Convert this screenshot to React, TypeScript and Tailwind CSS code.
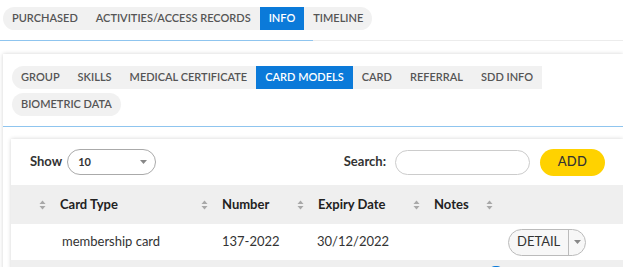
const mainTabs = ['PURCHASED', 'ACTIVITIES/ACCESS RECORDS', 'INFO', 'TIMELINE']
const subTabs = ['GROUP', 'SKILLS', 'MEDICAL CERTIFICATE', 'CARD MODELS', 'CARD', 'REFERRAL', 'SDD INFO']

function SortIcon() {
  return (
    <svg width="7" height="10" viewBox="0 0 7 10" className="shrink-0 text-[#a8a8a8]">
      <path d="M3.5 0.5 L6.5 4 H0.5 Z" fill="currentColor" />
      <path d="M3.5 9.5 L6.5 6 H0.5 Z" fill="currentColor" />
    </svg>
  )
}

function Caret() {
  return (
    <svg width="7" height="4" viewBox="0 0 7 4">
      <path d="M0 0 H7 L3.5 4 Z" fill="#888" />
    </svg>
  )
}

function Tab({ label, active }: { label: string; active?: boolean }) {
  return (
    <span
      className={
        active
          ? 'flex h-[23px] items-center bg-[#0b7ad9] px-[9px] text-white'
          : 'flex h-[23px] items-center px-[9px] text-[#555]'
      }
    >
      {label}
    </span>
  )
}

export default function App() {
  return (
    <div className="h-[267px] w-[623px] overflow-hidden bg-white font-['Lato',sans-serif] text-[11px] font-semibold">
      {/* top tabs */}
      <div className="px-[3px] pt-[7px]">
        <div className="inline-flex overflow-hidden rounded-full bg-[#f1f1f1]">
          {mainTabs.map((t) => (
            <Tab key={t} label={t} active={t === 'INFO'} />
          ))}
        </div>
      </div>
      <div className="mt-[10px] flex h-[1px]">
        <div className="h-[1px] w-[313px] bg-[#8fc5ef]" />
        <div className="h-[1px] flex-1 bg-[#ececec]" />
      </div>

      {/* info card */}
      <div className="ml-[3px] mt-[13px] bg-white shadow-[0_0_4px_rgba(0,0,0,0.18)]">
        <div className="flex flex-col items-start gap-[4px] px-[9px] pt-[12px]">
          <div className="flex overflow-hidden rounded-l-full bg-[#f1f1f1]">
            {subTabs.map((t) => (
              <Tab key={t} label={t} active={t === 'CARD MODELS'} />
            ))}
          </div>
          <div className="flex overflow-hidden rounded-full bg-[#f1f1f1]">
            <Tab label="BIOMETRIC DATA" />
          </div>
        </div>
        <div className="mt-[10px] h-[1px] bg-[#8fc5ef]" />

        {/* table card */}
        <div className="ml-[8px] mt-[12px] bg-white shadow-[0_0_4px_rgba(0,0,0,0.18)]">
          <div className="flex h-[46px] items-center pl-[19px] pr-[18px] text-[13px] text-[#333]">
            <span className="font-bold">Show</span>
            <div className="ml-[5px] flex h-[26px] w-[89px] items-center justify-between rounded-full border border-[#aaa] pl-[10px] pr-[8px] text-[11px] font-bold text-[#333]">
              <span>10</span>
              <Caret />
            </div>
            <span className="ml-auto font-bold">Search:</span>
            <div className="ml-[9px] h-[25px] w-[135px] rounded-full border border-[#ccc]" />
            <button className="ml-[10px] h-[27px] w-[65px] rounded-full bg-[#ffd200] text-[13px] font-medium tracking-wide text-[#333]">
              ADD
            </button>
          </div>

          {/* table */}
          <div className="flex h-[39px] items-center bg-[#efefef] text-[13px] font-bold text-[#222]">
            <div className="flex w-[190px] items-center pl-[28px]">
              <SortIcon />
              <span className="ml-[14px]">Card Type</span>
            </div>
            <div className="flex w-[96px] items-center">
              <SortIcon />
              <span className="ml-[14px]">Number</span>
            </div>
            <div className="flex w-[116px] items-center">
              <SortIcon />
              <span className="ml-[14px]">Expiry Date</span>
            </div>
            <div className="flex items-center">
              <SortIcon />
              <span className="ml-[14px]">Notes</span>
              <span className="ml-[17px]">
                <SortIcon />
              </span>
            </div>
          </div>
          <div className="flex h-[36px] items-center text-[13px] font-normal text-[#333]">
            <span className="w-[211px] shrink-0 pl-[51px]">membership card</span>
            <span className="w-[95px] shrink-0">137-2022</span>
            <span className="w-[191px] shrink-0">30/12/2022</span>
            <div className="flex h-[27px] items-center rounded-full border border-[#bbb] bg-[#f7f7f7] text-[13px] text-[#333]">
              <span className="px-[8px]">DETAIL</span>
              <span className="flex h-full w-[17px] items-center justify-center border-l border-[#bbb]">
                <Caret />
              </span>
            </div>
          </div>
          <div className="relative h-[10px] bg-[#efefef]">
            <div className="absolute left-[478px] top-[6px] h-[12px] w-[14px] rounded-full bg-[#0b7ad9]" />
          </div>
        </div>
      </div>
    </div>
  )
}
